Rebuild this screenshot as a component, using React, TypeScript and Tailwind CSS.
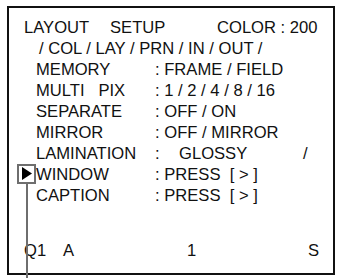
import React from "react";

const font = { fontFamily: '"Liberation Sans", Arial, sans-serif' };

function Row({ label, value, children }: { label: string; value?: string; children?: React.ReactNode }) {
  return (
    <div className="relative flex h-[21px] items-center pl-[27px] whitespace-pre">
      <span className="w-[119px]">{label}</span>
      {value !== undefined ? <span>{value}</span> : null}
      {children}
    </div>
  );
}

export default function App() {
  return (
    <div className="relative h-[278px] w-[340px] overflow-hidden bg-white text-[16.6px] leading-[21px] text-[#111]" style={font}>
      <div className="ml-[7px] mt-[6px] flex h-[269px] w-[328px] flex-col border-2 border-[#111] pt-[8.5px]">
        <div className="flex h-[21px] items-center whitespace-pre pl-[15px]">
          <span className="w-[86px]">LAYOUT</span>
          <span className="w-[107px]">SETUP</span>
          <span>COLOR : 200</span>
        </div>
        <div className="flex h-[21px] items-center whitespace-pre pl-[30px]">/ COL / LAY / PRN / IN / OUT /</div>
        <Row label="MEMORY" value=": FRAME / FIELD" />
        <Row label="MULTI   PIX" value=": 1 / 2 / 4 / 8 / 16" />
        <Row label="SEPARATE" value=": OFF / ON" />
        <Row label="MIRROR" value=": OFF / MIRROR" />
        <div className="flex h-[21px] items-center whitespace-pre pl-[27px]">
          <span className="w-[119px]">LAMINATION</span>
          <span className="w-[24px]">:</span>
          <span className="w-[124px]">GLOSSY</span>
          <span>/</span>
        </div>
        <Row label="WINDOW" value=": PRESS  [ > ]">
          <div className="absolute left-[8px] top-[0px] flex h-[20px] w-[19px] items-center justify-center border-2 border-[#6e6e6e] bg-white">
            <svg width="10" height="13" viewBox="0 0 10 13" className="ml-[1px]">
              <polygon points="0,0 10,6.5 0,13" fill="#000" />
            </svg>
          </div>
          <div className="absolute left-[16.5px] top-[20px] h-[120px] w-[2px] bg-[#6e6e6e]" />
        </Row>
        <Row label="CAPTION" value=": PRESS  [ > ]" />
        <div className="flex-1" />
        <div className="mb-[12px] flex h-[21px] items-center whitespace-pre pl-[15px]">
          <span className="w-[39px]">Q1</span>
          <span className="w-[124px]">A</span>
          <span className="w-[121px]">1</span>
          <span>S</span>
        </div>
      </div>
    </div>
  );
}
